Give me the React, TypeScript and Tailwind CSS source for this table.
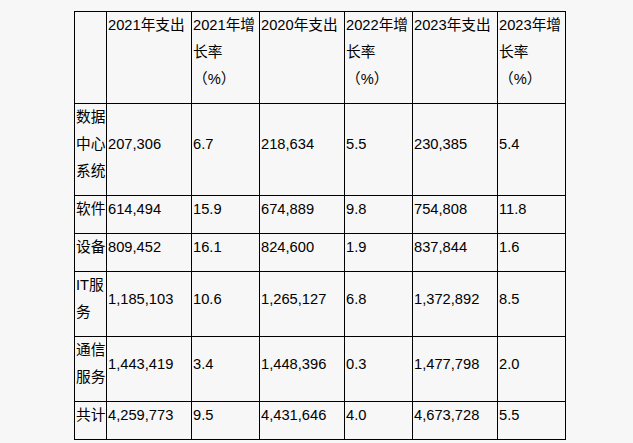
const HEAD: string[][] = [
  [],
  ['2021年支出'],
  ['2021年增', '长率', '（%）'],
  ['2020年支出'],
  ['2022年增', '长率', '（%）'],
  ['2023年支出'],
  ['2023年增', '长率', '（%）'],
];

const ROWS: { name: string[]; values: string[] }[] = [
  { name: ['数据', '中心', '系统'], values: ['207,306', '6.7', '218,634', '5.5', '230,385', '5.4'] },
  { name: ['软件'], values: ['614,494', '15.9', '674,889', '9.8', '754,808', '11.8'] },
  { name: ['设备'], values: ['809,452', '16.1', '824,600', '1.9', '837,844', '1.6'] },
  { name: ['IT服', '务'], values: ['1,185,103', '10.6', '1,265,127', '6.8', '1,372,892', '8.5'] },
  { name: ['通信', '服务'], values: ['1,443,419', '3.4', '1,448,396', '0.3', '1,477,798', '2.0'] },
  { name: ['共计'], values: ['4,259,773', '9.5', '4,431,646', '4.0', '4,673,728', '5.5'] },
];

const WIDTHS = ['w-[32px]', 'w-[85px]', 'w-[68px]', 'w-[85px]', 'w-[68px]', 'w-[85px]', 'w-[68px]'];

function Lines({ lines }: { lines: string[] }) {
  return (
    <>
      {lines.map((l, i) => (
        <span key={i}>
          {i > 0 && <br />}
          {l}
        </span>
      ))}
    </>
  );
}

export default function App() {
  return (
    <div className="h-[443px] w-full overflow-hidden bg-[#f7f7f7] pl-[74px] pt-[11px] font-['Liberation_Sans','Noto_Sans_CJK_SC',sans-serif] text-[14.7px] leading-[27px] text-black">
      <table className="table-fixed border-collapse">
        <colgroup>
          {WIDTHS.map((w, i) => (
            <col key={i} className={w} />
          ))}
        </colgroup>
        <thead>
          <tr>
            {HEAD.map((h, i) => (
              <th key={i} className="border border-black pb-[10px] pl-px pr-0 pt-0 text-left align-top font-normal">
                <Lines lines={h} />
              </th>
            ))}
          </tr>
        </thead>
        <tbody>
          {ROWS.map((r) => (
            <tr key={r.name.join('')}>
              <td className="border border-black pb-[10px] pl-px pr-0 pt-0 align-middle">
                <Lines lines={r.name} />
              </td>
              {r.values.map((v, i) => (
                <td key={i} className="border border-black pb-[10px] pl-px pr-0 pt-0 align-middle">
                  {v}
                </td>
              ))}
            </tr>
          ))}
        </tbody>
      </table>
    </div>
  );
}
